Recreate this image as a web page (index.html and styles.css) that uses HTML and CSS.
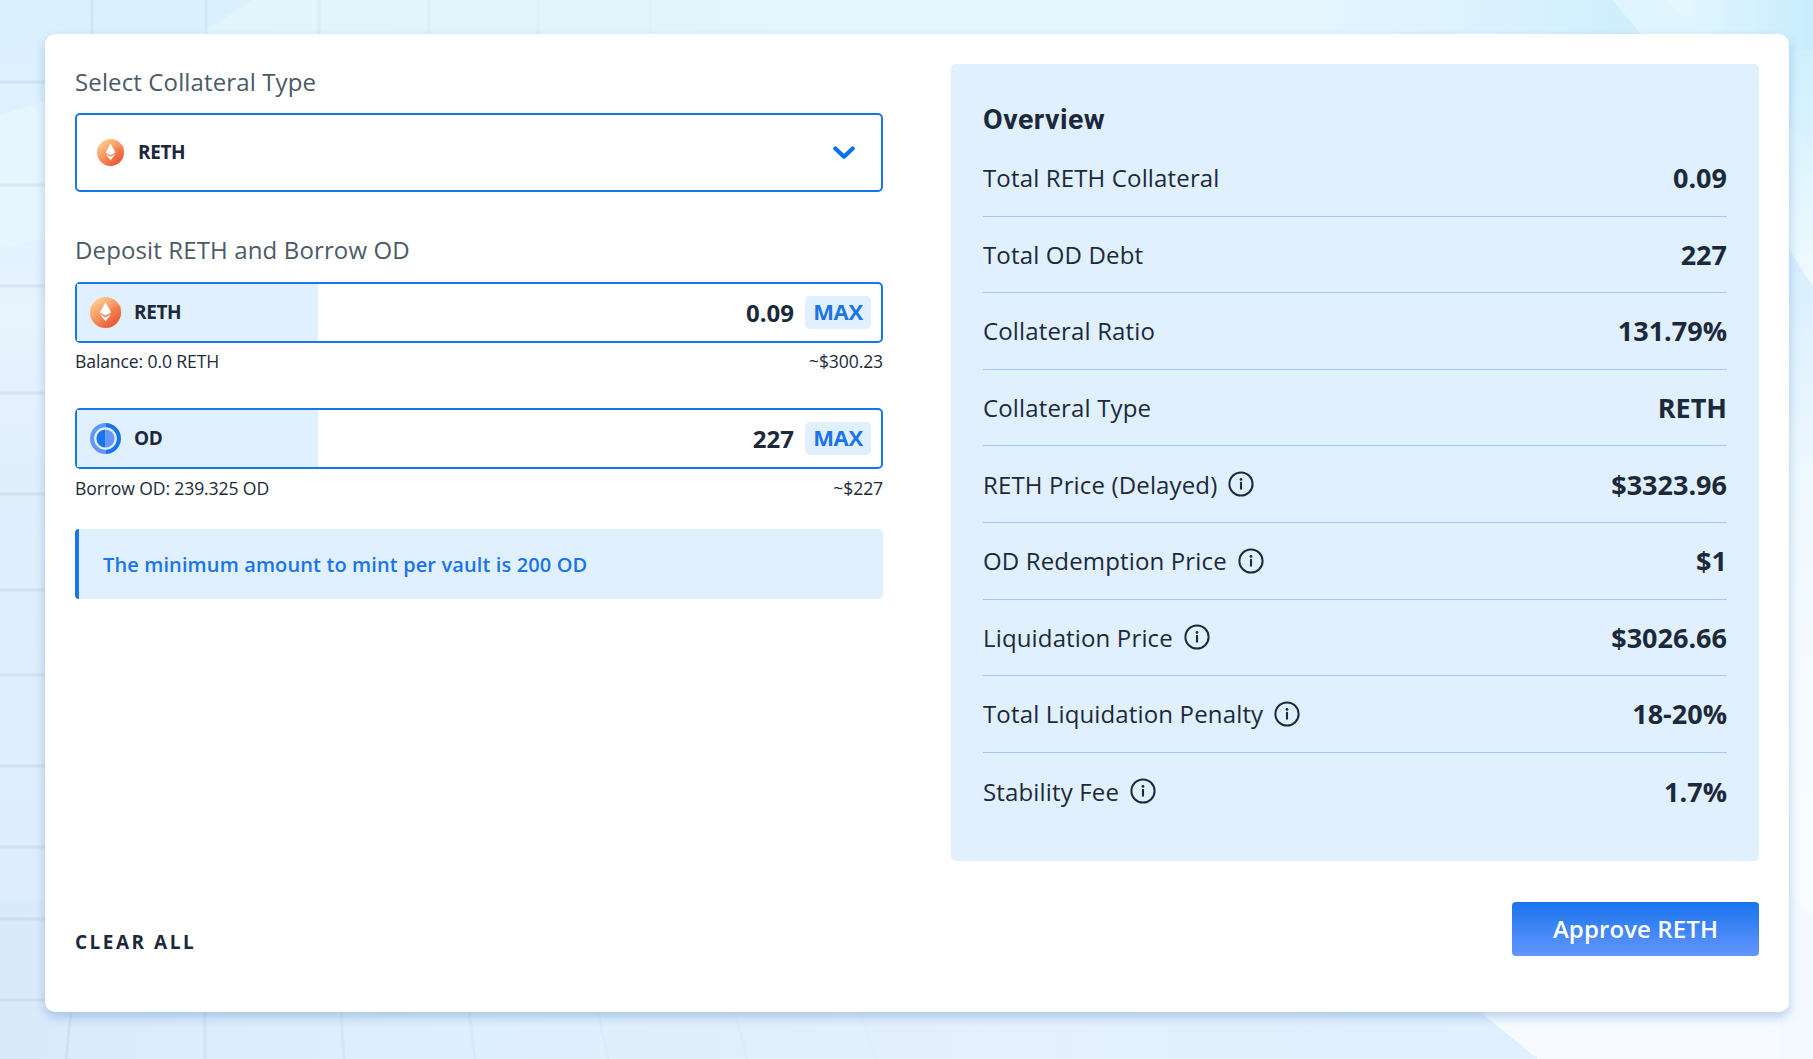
FILE: index.html
```
<!DOCTYPE html>
<html lang="en">
<head>
<meta charset="utf-8">
<title>Create Vault</title>
<link rel="stylesheet" href="styles.css">
</head>
<body>
<svg class="backdrop" viewBox="0 0 1813 1059" preserveAspectRatio="none" aria-hidden="true">
  <defs>
    <linearGradient id="sky" x1="0" y1="0" x2="0" y2="1"><stop offset="0" stop-color="#daf0fe"/><stop offset=".3" stop-color="#e7f3fd"/><stop offset=".5" stop-color="#dfeefc"/><stop offset="1" stop-color="#dcedfb"/></linearGradient>
    <linearGradient id="floor" x1="0" y1="0" x2="1" y2="0"><stop offset="0" stop-color="#d9eafa"/><stop offset=".25" stop-color="#deeffd"/><stop offset=".55" stop-color="#e4f0fc"/><stop offset=".8" stop-color="#e0f0ff"/></linearGradient>
    <linearGradient id="beam" x1="0" y1="0" x2="1" y2="0"><stop offset="0" stop-color="#e1f5fc"/><stop offset=".7" stop-color="#e4f5fe"/><stop offset=".82" stop-color="#daf2fe"/><stop offset=".88" stop-color="#d0effd"/></linearGradient>
    <linearGradient id="edge" x1="0" y1="0" x2="0" y2="1"><stop offset="0" stop-color="#c9eefd"/><stop offset=".13" stop-color="#daf3fe"/><stop offset=".23" stop-color="#d6eefe"/><stop offset=".45" stop-color="#eef8ff"/><stop offset=".65" stop-color="#f6fbff"/><stop offset=".85" stop-color="#f7fcff"/></linearGradient>
    <linearGradient id="ray" x1="0" y1="0" x2="0" y2="1"><stop offset="0" stop-color="#d8f3fe"/><stop offset="1" stop-color="#f0faff"/></linearGradient>
    <linearGradient id="corner" x1="0" y1="0" x2="1" y2="0"><stop offset="0" stop-color="#e6f8fe"/><stop offset="1" stop-color="#c9edfd"/></linearGradient>
    <linearGradient id="line" gradientUnits="userSpaceOnUse" x1="0" y1="0" x2="1050" y2="0"><stop offset="0" stop-color="#5d86a8" stop-opacity=".1"/><stop offset=".4" stop-color="#5d86a8" stop-opacity=".06"/><stop offset="1" stop-color="#5d86a8" stop-opacity="0"/></linearGradient>
  </defs>
  <rect width="1813" height="1059" fill="url(#sky)"/>
  <rect y="900" width="1813" height="159" fill="url(#floor)"/>
  <path d="M252 0H1813V60H140L200 34Z" fill="url(#beam)"/>
  <path d="M0 115L60 97V235L0 248Z" fill="#e6f6fe"/>
  <rect x="1780" width="33" height="1059" fill="url(#edge)"/>
  <path d="M1612 0H1664L1702 34L1720 50H1655L1641 34Z" fill="#e0f6fe"/>
  <path d="M1664 0H1813V50H1720L1702 34Z" fill="url(#corner)"/>
  <path d="M1780 115L1813 151V287L1780 235Z" fill="url(#ray)"/>
  <path d="M1480 1012L1538 1059H1813V1000H1466Z" fill="#f7fbff"/>
  <path d="M1780 882L1813 918V1059H1780Z" fill="#f3f9ff"/>
  <g class="grid">
    <path d="M0 82H45M0 185H45M0 286H45M0 393H45M0 494H45M0 590H45M0 675H45M0 766H45M0 847H45M0 919H45M0 1000H45" stroke="#5d86a8" stroke-opacity=".11"/>
    <path d="M92 0V34M206 0V34M319 0V34M429 0V34M538 0V34M650 0V34M71 1012L66 1059M205 1012V1059M341 1012L344 1059M469 1012L475 1059M598 1012L608 1059M735 1012L747 1059M860 1012L876 1059M1006 1012L1022 1059" stroke="url(#line)"/>
  </g>
</svg>

<svg class="sprite" aria-hidden="true">
  <defs>
    <linearGradient id="coin" x1=".15" y1=".1" x2=".8" y2=".95"><stop offset="0" stop-color="#ffcd8d"/><stop offset=".5" stop-color="#f5915f"/><stop offset="1" stop-color="#ec4f2a"/></linearGradient>
    <symbol id="reth" viewBox="0 0 30 30">
      <circle cx="15" cy="15" r="15" fill="url(#coin)"/>
      <path d="M20 12L29 7A15 15 0 0 1 29.5 19L20 25Z" fill="#f36f43" opacity=".35"/>
      <path d="M15 5L20.5 15L15 18L9.5 15Z" fill="#fff"/>
      <path d="M9.6 16.8L15 19.8L20.4 16.8L15 23.5Z" fill="#fff"/>
    </symbol>
    <symbol id="od" viewBox="0 0 30 30">
      <path d="M15 0A15 15 0 0 0 15 30V26A11 11 0 0 1 15 4Z" fill="#6396ff"/>
      <path d="M15 0A15 15 0 0 1 15 30V26A11 11 0 0 0 15 4Z" fill="#1a74ec"/>
      <path d="M15 6.2A8.8 8.8 0 0 0 15 23.8Z" fill="#1a74ec"/>
      <path d="M15 6.2A8.8 8.8 0 0 1 15 23.8Z" fill="#6396ff"/>
    </symbol>
    <symbol id="info" viewBox="0 0 26 26">
      <circle cx="13" cy="13" r="11.6" fill="none" stroke="#1c293a" stroke-width="2"/>
      <circle cx="13" cy="8.4" r="1.4" fill="#1c293a"/>
      <path d="M13 11.8V17.8" stroke="#1c293a" stroke-width="2.1" stroke-linecap="round"/>
    </symbol>
  </defs>
</svg>

<main class="card">
  <div class="columns">
    <section class="form">
      <h2 class="label">Select Collateral Type</h2>
      <div class="select">
        <svg class="select-coin"><use href="#reth"/></svg>
        <span class="token">RETH</span>
        <svg class="chevron" viewBox="0 0 22 14"><path d="M2.3 2.5L11 10.8L19.7 2.5" fill="none" stroke="#0b72ec" stroke-width="4.2" stroke-linecap="round" stroke-linejoin="round"/></svg>
      </div>

      <h2 class="label label-deposit">Deposit RETH and Borrow OD</h2>
      <div class="field">
        <div class="addon"><svg class="coin"><use href="#reth"/></svg><span class="token">RETH</span></div>
        <span class="amount">0.09</span><button class="max">MAX</button>
      </div>
      <div class="hint"><span>Balance: 0.0 RETH</span><span>~$300.23</span></div>

      <div class="field field-borrow">
        <div class="addon"><svg class="coin"><use href="#od"/></svg><span class="token">OD</span></div>
        <span class="amount">227</span><button class="max">MAX</button>
      </div>
      <div class="hint hint-borrow"><span>Borrow OD: 239.325 OD</span><span>~$227</span></div>

      <div class="notice">The minimum amount to mint per vault is 200 OD</div>
    </section>

    <section class="overview">
      <h2 class="heading">Overview</h2>
      <div class="row"><span class="name">Total RETH Collateral</span><span class="value">0.09</span></div>
      <div class="row"><span class="name">Total OD Debt</span><span class="value">227</span></div>
      <div class="row"><span class="name">Collateral Ratio</span><span class="value">131.79%</span></div>
      <div class="row"><span class="name">Collateral Type</span><span class="value">RETH</span></div>
      <div class="row"><span class="name">RETH Price (Delayed)</span><svg class="info"><use href="#info"/></svg><span class="value">$3323.96</span></div>
      <div class="row"><span class="name">OD Redemption Price</span><svg class="info"><use href="#info"/></svg><span class="value">$1</span></div>
      <div class="row"><span class="name">Liquidation Price</span><svg class="info"><use href="#info"/></svg><span class="value">$3026.66</span></div>
      <div class="row"><span class="name">Total Liquidation Penalty</span><svg class="info"><use href="#info"/></svg><span class="value">18-20%</span></div>
      <div class="row"><span class="name">Stability Fee</span><svg class="info"><use href="#info"/></svg><span class="value">1.7%</span></div>
    </section>
  </div>

  <footer class="actions">
    <button class="clear">CLEAR ALL</button>
    <button class="approve">Approve RETH</button>
  </footer>
</main>
</body>
</html>
```
FILE: styles.css
```
* { box-sizing: border-box; }

body {
  margin: 0;
  height: 1059px;
  padding: 34px 24px 47px 45px;
  overflow: hidden;
  background: #e0effc;
  color: #1c293a;
  font-family: "Open Sans", "Noto Sans", sans-serif;
}

.backdrop { position: absolute; inset: 0; width: 100%; height: 100%; }
.grid { fill: none; stroke-width: 3; }
.sprite { position: absolute; width: 0; height: 0; }

button { border: 0; padding: 0; font: inherit; color: inherit; background: none; }

.card {
  position: relative;
  height: 978px;
  padding: 30px;
  border-radius: 10px;
  background: #fff;
  box-shadow: 0 5px 11px rgba(58, 118, 190, .33);
}

.columns { display: grid; grid-template-columns: 808px 808px; justify-content: space-between; }

.label {
  margin: 0;
  height: 49px;
  line-height: 36px;
  font-size: 24px;
  font-weight: 400;
  letter-spacing: .13px;
  color: #4b5a66;
}
.label-deposit { height: 50px; margin-top: 40px; }

.select {
  display: flex;
  align-items: center;
  height: 79px;
  padding: 0 26px 0 20px;
  border: 2px solid #1a74ec;
  border-radius: 5px;
}
.select-coin { width: 27px; height: 27px; margin-right: 14px; }
.chevron { width: 22px; height: 14px; margin-left: auto; }
.token { margin-top: -2px; font-size: 19px; font-weight: 700; letter-spacing: -.4px; }

.field {
  display: flex;
  align-items: center;
  height: 61px;
  border: 2px solid #1a74ec;
  border-radius: 5px;
}
.field-borrow { margin-top: 26px; }
.addon {
  display: flex;
  align-items: center;
  gap: 13px;
  width: 241px;
  height: 100%;
  padding-left: 13px;
  background: #e1f0ff;
}
.coin { width: 31px; height: 31px; }
.amount { margin-left: auto; font-size: 24px; font-weight: 700; line-height: 33px; }
.max {
  width: 66px;
  height: 33px;
  margin: 0 10px 0 11px;
  padding-bottom: 2px;
  border-radius: 5px;
  background: #e1f0ff;
  color: #1a74ec;
  font-size: 22px;
  font-weight: 700;
  letter-spacing: -.3px;
  line-height: 31px;
}

.hint { display: flex; justify-content: space-between; height: 39px; line-height: 36px; font-size: 17.6px; letter-spacing: -.13px; }
.hint-borrow { height: 60px; line-height: 38px; }

.notice {
  height: 70px;
  padding-left: 24px;
  border-left: 4px solid #1a74ec;
  border-radius: 4px;
  background: #e1f0ff;
  color: #1a74ec;
  font-size: 20px;
  font-weight: 600;
  letter-spacing: .12px;
  line-height: 72px;
}

.overview { height: 797px; padding: 34px 32px 0; border-radius: 5px; background: #e1f0ff; }
.heading { margin: 0; height: 42px; font: 700 28.5px/44px Roboto, sans-serif; letter-spacing: .5px; }
.row { display: flex; align-items: center; height: 76.6px; border-bottom: 1px solid #a4c9f8; font-size: 24px; }
.row:last-child { border-bottom: 0; }
.name { letter-spacing: .15px; }
.info { width: 26px; height: 26px; margin-left: 11px; }
.value { margin-left: auto; font-size: 27px; font-weight: 700; }

.actions { display: flex; justify-content: space-between; align-items: flex-start; padding-top: 41px; }
.clear { margin-top: 26px; font-size: 19px; font-weight: 700; letter-spacing: 2.5px; line-height: 28px; }
.approve {
  width: 247px;
  height: 54px;
  border-radius: 4px;
  background: linear-gradient(#1a74ec, #6396ff);
  color: #fff;
  font-size: 24px;
  font-weight: 600;
  letter-spacing: .1px;
  line-height: 52px;
}
```
